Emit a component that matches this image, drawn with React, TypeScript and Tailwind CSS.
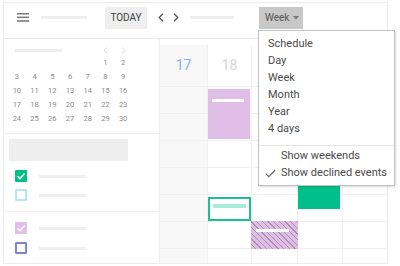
import React from "react";

const miniDays: (number | null)[] = [
  null, null, null, null, null, 1, 2,
  3, 4, 5, 6, 7, 8, 9,
  10, 11, 12, 13, 14, 15, 16,
  17, 18, 19, 20, 21, 22, 23,
  24, 25, 26, 27, 28, 29, 30,
];

const menuItems = ["Schedule", "Day", "Week", "Month", "Year", "4 days"];

function Tick({ className }: { className?: string }) {
  return (
    <svg viewBox="0 0 12 12" className={className} fill="none">
      <path d="M2.5 6.2 L5 8.6 L9.6 3.6" stroke="currentColor" strokeWidth="1.5" />
    </svg>
  );
}

function CalendarGrid() {
  const rows = 8;
  const cols = 5;
  const cells = [];
  for (let r = 0; r < rows; r++) {
    for (let c = 0; c < cols; c++) {
      const last = c === cols - 1;
      const bottom = r === rows - 1;
      cells.push(
        <div
          key={`${r}-${c}`}
          className={`${last ? "" : "border-r"} ${bottom ? "" : "border-b"} border-[#f0f0f0] ${
            c === 0 ? "bg-[#f8f8f8]" : "bg-white"
          } flex items-center justify-center text-[14px]`}
          style={{ gridRowStart: r + 1, gridColumnStart: c + 1 }}
        >
          {r === 0 && c === 0 && <span className="text-[#82b1ff]">17</span>}
          {r === 0 && c === 1 && <span className="text-[#d4d4d4]">18</span>}
        </div>
      );
    }
  }

  return (
    <div className="grid grid-cols-[48px_44px_46px_45px_44px] grid-rows-[42px_27px_27px_27px_27px_27px_27px_14px]">
      {cells}

      {/* purple event */}
      <div className="col-start-2 row-start-2 row-span-2 mt-[2px] mr-[2px] mb-[2px] bg-[#e1bee7] pt-[10px] pl-[4px] z-10">
        <div className="w-[32px] h-[3px] bg-white"></div>
      </div>

      {/* outlined green event */}
      <div className="col-start-2 row-start-6 mt-[2px] mb-[1px] mr-[1px] border-2 border-[#1dbf8e] bg-white pt-[5px] pl-[3px] z-10">
        <div className="w-[33px] h-[4px] bg-[#a8ecd6]"></div>
      </div>

      {/* solid green event */}
      <div className="col-start-4 row-start-5 row-span-2 self-start mt-[2px] mr-[3px] h-[39px] bg-[#00bf8a] z-10"></div>

      {/* hatched declined event */}
      <div className="col-start-3 row-start-7 -ml-px -mt-px h-[28px] bg-[repeating-linear-gradient(45deg,#e1bee7_0px,#e1bee7_3px,#a892ad_3px,#a892ad_4px)] pt-[8px] pl-[5px] z-10">
        <div className="w-[33px] h-[3px] bg-white"></div>
      </div>
    </div>
  );
}

export default function App() {
  return (
    <div className="relative w-[400px] h-[266px] bg-white overflow-hidden font-['Roboto',sans-serif]">
      <div className="ml-[3px] mt-[2px] w-[385px] h-[262px] border border-[#ececec] flex flex-col">
        {/* Top bar */}
        <div className="h-[36px] shrink-0 border-b border-[#eaeaea] flex items-center pb-[6px] pl-[13px]">
          <svg width="12" height="9" viewBox="0 0 12 9">
            <rect x="0" y="0" width="12" height="1.5" fill="#777" />
            <rect x="0" y="3.6" width="12" height="1.5" fill="#777" />
            <rect x="0" y="7.2" width="12" height="1.5" fill="#777" />
          </svg>
          <div className="ml-[12px] w-[46px] h-[3px] bg-[#eeeeee]"></div>
          <div className="ml-[18px] w-[42px] h-[22px] bg-[#eeeeee] flex items-center justify-center text-[10px] text-[#424242]">
            TODAY
          </div>
          <svg className="ml-[11px]" width="6" height="9" viewBox="0 0 6 9" fill="none">
            <path d="M5 0.8 L1.2 4.5 L5 8.2" stroke="#555" strokeWidth="1.3" />
          </svg>
          <svg className="ml-[9px]" width="6" height="9" viewBox="0 0 6 9" fill="none">
            <path d="M1 0.8 L4.8 4.5 L1 8.2" stroke="#555" strokeWidth="1.3" />
          </svg>
          <div className="ml-[11px] w-[44px] h-[3px] bg-[#eeeeee]"></div>
          <div className="ml-[25px] w-[44px] h-[22px] bg-[#c8c8c8] flex items-center pl-[6px] text-[10px] text-[#555]">
            Week
            <svg className="ml-[4px]" width="6" height="4" viewBox="0 0 6 4">
              <path d="M0 0 L6 0 L3 3.5 Z" fill="#777" />
            </svg>
          </div>
        </div>

        <div className="flex flex-1 min-h-0">
          {/* Sidebar */}
          <div className="w-[156px] shrink-0 border-r border-[#eeeeee] flex flex-col">
            <div className="h-[95px] border-b border-[#f0f0f0] px-[4px]">
              <div className="mt-[5px] w-[124px] h-[12px] grid grid-cols-7 items-center">
                <div className="col-span-5 ml-[7px] w-[47px] h-[3px] bg-[#eeeeee]"></div>
                <div className="flex justify-center">
                  <svg width="5" height="7" viewBox="0 0 5 7" fill="none">
                    <path d="M4 0.6 L1 3.5 L4 6.4" stroke="#d6d6d6" strokeWidth="1" />
                  </svg>
                </div>
                <div className="flex justify-center">
                  <svg width="5" height="7" viewBox="0 0 5 7" fill="none">
                    <path d="M1 0.6 L4 3.5 L1 6.4" stroke="#d6d6d6" strokeWidth="1" />
                  </svg>
                </div>
              </div>
              <div className="w-[124px] grid grid-cols-7 auto-rows-[14px] text-[7.5px] text-[#8a8a8a]">
                {miniDays.map((d, i) => (
                  <div key={i} className="flex items-center justify-center">
                    {d}
                  </div>
                ))}
              </div>
            </div>

            <div className="h-[78px] border-b border-[#f0f0f0] pt-[5px]">
              <div className="ml-[5px] w-[119px] h-[22px] bg-[#eeeeee]"></div>
              <div className="mt-[9px] ml-[11px] flex items-center">
                <div className="w-[12px] h-[12px] bg-[#00bf8a] text-white rounded-[1px]">
                  <Tick className="w-[12px] h-[12px]" />
                </div>
                <div className="ml-[12px] w-[47px] h-[3px] bg-[#eeeeee]"></div>
              </div>
              <div className="mt-[7px] ml-[11px] flex items-center">
                <div className="w-[12px] h-[12px] border-2 border-[#b3e5fc] rounded-[1px]"></div>
                <div className="ml-[12px] w-[47px] h-[3px] bg-[#eeeeee]"></div>
              </div>
            </div>

            <div className="flex-1 pt-[10px]">
              <div className="ml-[11px] flex items-center">
                <div className="w-[12px] h-[12px] bg-[#e1bee7] text-white rounded-[1px]">
                  <Tick className="w-[12px] h-[12px]" />
                </div>
                <div className="ml-[12px] w-[47px] h-[3px] bg-[#eeeeee]"></div>
              </div>
              <div className="mt-[8px] ml-[11px] flex items-center">
                <div className="w-[12px] h-[12px] border-2 border-[#7986cb] rounded-[1px]"></div>
                <div className="ml-[12px] w-[47px] h-[3px] bg-[#eeeeee]"></div>
              </div>
            </div>
          </div>

          {/* Week grid */}
          <div className="flex-1 pt-[6px]">
            <CalendarGrid />
          </div>
        </div>
      </div>

      {/* View dropdown */}
      <div className="absolute left-[258px] top-[30px] w-[137px] h-[156px] bg-white border border-[#c2c2c2] shadow-[1px_1px_2px_rgba(0,0,0,0.15)] z-20 pt-[5px] text-[11px] text-[#4a4a4a] whitespace-nowrap">
        {menuItems.map((item) => (
          <div key={item} className="h-[17px] flex items-center pl-[9px]">
            {item}
          </div>
        ))}
        <div className="mt-[7px] border-t border-[#e6e6e6]"></div>
        <div className="mt-[2px] h-[17px] flex items-center pl-[22px]">Show weekends</div>
        <div className="h-[17px] flex items-center pl-[6px]">
          <svg width="11" height="9" viewBox="0 0 11 9" fill="none">
            <path d="M0.8 4.6 L3.8 7.6 L10.2 1" stroke="#666" strokeWidth="1.2" />
          </svg>
          <span className="ml-[5px]">Show declined events</span>
        </div>
      </div>
    </div>
  );
}
